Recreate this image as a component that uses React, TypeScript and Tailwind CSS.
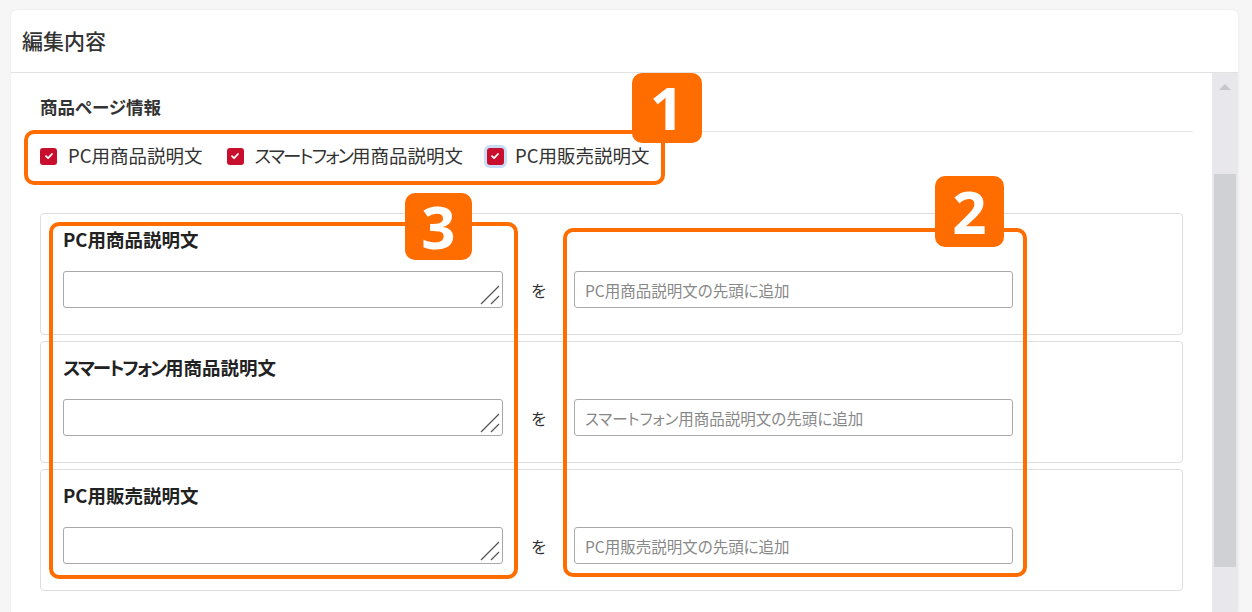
import React from 'react'

const rows = [
  { label: 'PC用商品説明文', placeholder: 'PC用商品説明文の先頭に追加' },
  { label: 'スマートフォン用商品説明文', placeholder: 'スマートフォン用商品説明文の先頭に追加' },
  { label: 'PC用販売説明文', placeholder: 'PC用販売説明文の先頭に追加' },
]

const checks = [
  { label: 'PC用商品説明文', focus: false },
  { label: 'スマートフォン用商品説明文', focus: false },
  { label: 'PC用販売説明文', focus: true },
]

// the katakana in the reference font is narrower than in Noto, so tighten it
function Label({ text }: { text: string }) {
  const kana = 'スマートフォン'
  if (!text.startsWith(kana)) return <>{text}</>
  return (
    <>
      <span className="tracking-[-2px]">{kana}</span>
      {text.slice(kana.length)}
    </>
  )
}

function CheckBox({ focus }: { focus: boolean }) {
  return (
    <span
      className={
        'flex h-[17px] w-[17px] shrink-0 items-center justify-center rounded-[3px] bg-[#c8102e] ' +
        (focus ? 'ring-[3px] ring-[#c9dcf8]' : '')
      }
    >
      <svg width="10" height="10" viewBox="0 0 10 10">
        <path d="M2 5.2 L4.1 7.2 L8 3" fill="none" stroke="#fff" strokeWidth="1.8" strokeLinecap="round" strokeLinejoin="round" />
      </svg>
    </span>
  )
}

function Badge({ n, className }: { n: string; className: string }) {
  return (
    <div
      className={
        'absolute flex items-center justify-center rounded-[10px] bg-[#ff6d00] text-[60px] font-bold leading-none text-white ' +
        className
      }
      style={{ fontFamily: '"Noto Sans", "DejaVu Sans", sans-serif' }}
    >
      <span className="-mt-[2px]">{n}</span>
    </div>
  )
}

// textarea with the drawn resize grip
function TextArea() {
  return (
    <div className="relative h-[37px] w-[440px]">
      <textarea className="h-full w-full resize-none rounded-[3px] border border-[#a9a9a9] bg-white" />
      <svg width="22" height="22" viewBox="0 0 22 22" className="pointer-events-none absolute bottom-[2px] right-[2px]">
        <path d="M2 20 L20 2 M12 20 L20 12" stroke="#555" strokeWidth="1.2" />
      </svg>
    </div>
  )
}

export default function App() {
  return (
    <div
      className="h-[612px] w-[1252px] overflow-hidden bg-[#f6f6f6] pl-[11px] pt-[10px] text-[#333] [font-feature-settings:'palt']"
      style={{ fontFamily: '"Noto Sans CJK JP", "Noto Sans", sans-serif' }}
    >
      <div className="relative w-[1227px] rounded-t-[6px] bg-white shadow-[0_0_3px_rgba(0,0,0,0.06)]">
        <div className="flex h-[63px] items-center border-b border-[#e2e2e2] px-[11px] text-[21px] font-medium text-[#333]">
          編集内容
        </div>

        <div className="flex">
          <div className="w-[1201px] pl-[29px] pr-[19px]">
            <div className="border-b border-[#e6e6e6] pb-[12px] pt-[22px] text-[17.5px] font-bold leading-[24px]">
              商品ページ情報
            </div>
            <div className="mt-[12px] flex h-[24px] items-center text-[18.5px]">
              {checks.map((c) => (
                <label key={c.label} className="mr-[24px] flex items-center">
                  <CheckBox focus={c.focus} />
                  <span className="ml-[11px]">
                    <Label text={c.label} />
                  </span>
                </label>
              ))}
            </div>

            <div className="mr-[10px] mt-[45px] flex flex-col gap-[6px]">
              {rows.map((r) => (
                <div key={r.label} className="h-[122px] rounded-[4px] border border-[#dedede] pl-[22px] pt-[13px]">
                  <div className="text-[18.5px] font-bold leading-[24px] text-[#222]">
                    <Label text={r.label} />
                  </div>
                  <div className="mt-[20px] flex items-center">
                    <TextArea />
                    <div className="w-[71px] text-center text-[16px]">を</div>
                    <input
                      className="h-[37px] w-[439px] rounded-[3px] border border-[#a9a9a9] px-[10px] text-[15.5px] placeholder:text-[#888]"
                      placeholder={r.placeholder}
                    />
                  </div>
                </div>
              ))}
            </div>
          </div>

          <div className="flex h-[540px] w-[26px] flex-col items-center bg-[#e8e8ec]">
            <svg width="12" height="8" viewBox="0 0 12 8" className="mt-[10px]">
              <path d="M0 7 L6 1 L12 7 Z" fill="#c6c7cc" />
            </svg>
            <div className="mt-[83px] h-[393px] w-[22px] bg-[#d0d1d5]" />
          </div>
        </div>

        {/* annotations */}
        <div className="absolute left-[13px] top-[120px] h-[55px] w-[641px] rounded-[10px] border-[4px] border-[#ff6d00]" />
        <Badge n="1" className="left-[621px] top-[63px] h-[70px] w-[70px]" />
        <div className="absolute left-[38px] top-[212px] h-[357px] w-[469px] rounded-[10px] border-[4px] border-[#ff6d00]" />
        <Badge n="3" className="left-[394px] top-[183px] h-[67px] w-[67px]" />
        <div className="absolute left-[552px] top-[218px] h-[349px] w-[464px] rounded-[10px] border-[4px] border-[#ff6d00]" />
        <Badge n="2" className="left-[924px] top-[166px] h-[71px] w-[69px]" />
      </div>
    </div>
  )
}
